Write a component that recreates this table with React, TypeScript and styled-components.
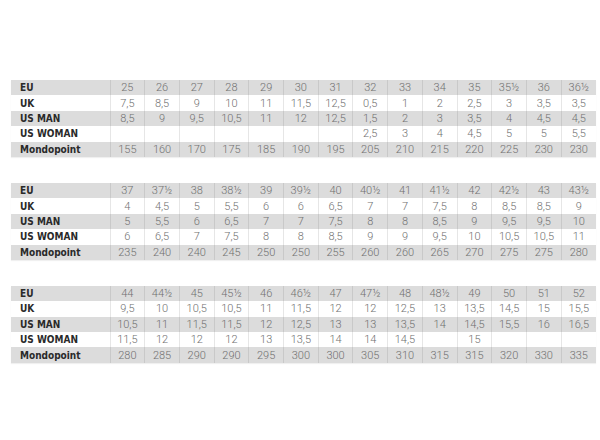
import React from 'react';
import styled, {createGlobalStyle} from 'styled-components';

const GlobalStyle = createGlobalStyle`
    html, body {
        margin: 0;
        padding: 0;
        background: #ffffff;
    }
`;

type Row = {label: string; values: string[]};

const tables: Row[][] = [
    [
        {label: 'EU', values: ['25', '26', '27', '28', '29', '30', '31', '32', '33', '34', '35', '35½', '36', '36½']},
        {label: 'UK', values: ['7,5', '8,5', '9', '10', '11', '11,5', '12,5', '0,5', '1', '2', '2,5', '3', '3,5', '3,5']},
        {label: 'US MAN', values: ['8,5', '9', '9,5', '10,5', '11', '12', '12,5', '1,5', '2', '3', '3,5', '4', '4,5', '4,5']},
        {label: 'US WOMAN', values: ['', '', '', '', '', '', '', '2,5', '3', '4', '4,5', '5', '5', '5,5']},
        {label: 'Mondopoint', values: ['155', '160', '170', '175', '185', '190', '195', '205', '210', '215', '220', '225', '230', '230']},
    ],
    [
        {label: 'EU', values: ['37', '37½', '38', '38½', '39', '39½', '40', '40½', '41', '41½', '42', '42½', '43', '43½']},
        {label: 'UK', values: ['4', '4,5', '5', '5,5', '6', '6', '6,5', '7', '7', '7,5', '8', '8,5', '8,5', '9']},
        {label: 'US MAN', values: ['5', '5,5', '6', '6,5', '7', '7', '7,5', '8', '8', '8,5', '9', '9,5', '9,5', '10']},
        {label: 'US WOMAN', values: ['6', '6,5', '7', '7,5', '8', '8', '8,5', '9', '9', '9,5', '10', '10,5', '10,5', '11']},
        {label: 'Mondopoint', values: ['235', '240', '240', '245', '250', '250', '255', '260', '260', '265', '270', '275', '275', '280']},
    ],
    [
        {label: 'EU', values: ['44', '44½', '45', '45½', '46', '46½', '47', '47½', '48', '48½', '49', '50', '51', '52']},
        {label: 'UK', values: ['9,5', '10', '10,5', '10,5', '11', '11,5', '12', '12', '12,5', '13', '13,5', '14,5', '15', '15,5']},
        {label: 'US MAN', values: ['10,5', '11', '11,5', '11,5', '12', '12,5', '13', '13', '13,5', '14', '14,5', '15,5', '16', '16,5']},
        {label: 'US WOMAN', values: ['11,5', '12', '12', '12', '13', '13,5', '14', '14', '14,5', '', '15', '', '', '']},
        {label: 'Mondopoint', values: ['280', '285', '290', '290', '295', '300', '300', '305', '310', '315', '315', '320', '330', '335']},
    ],
];

class SizeChart extends React.Component {

    public render() {
        return (
            <Page>
                <GlobalStyle />
                {tables.map((rows, t) => (
                    <SizeTable key={t}>
                        <colgroup>
                            <LabelCol />
                            {rows[0].values.map((_, i) => <col key={i} />)}
                        </colgroup>
                        <tbody>
                            {rows.map((row, r) => (
                                <SizeRow key={row.label} shaded={r % 2 === 0}>
                                    <Label>{row.label}</Label>
                                    {row.values.map((v, i) => <Value key={i}>{v}</Value>)}
                                </SizeRow>
                            ))}
                        </tbody>
                    </SizeTable>
                ))}
            </Page>
        );
    }
}

const Page = styled.div`
    width: 600px;
    height: 440px;
    box-sizing: border-box;
    padding: 80px 4px 0 11px;
    display: flex;
    flex-direction: column;
    gap: 26px;
`;

const SizeTable = styled.table`
    width: 585px;
    border-collapse: collapse;
    table-layout: fixed;
    box-shadow: 0 1px 1px rgba(0, 0, 0, 0.06);
`;

const LabelCol = styled.col`
    width: 99px;
`;

const SizeRow = styled.tr<{shaded: boolean}>`
    height: 15.4px;
    background: ${p => p.shaded ? '#dcdcdc' : '#ffffff'};

    td {
        border-left: 1px solid ${p => p.shaded ? '#c9c9c9' : '#e6e6e6'};
    }
`;

const Label = styled.td`
    padding: 0 0 0 9px;
    font-family: "DejaVu Sans Condensed", "DejaVu Sans", sans-serif;
    font-stretch: condensed;
    font-weight: bold;
    font-size: 10px;
    color: #2a2a2a;
    text-align: left;
    white-space: nowrap;
    line-height: 15px;

    && {
        border-left: none;
    }
`;

const Value = styled.td`
    padding: 0;
    font-family: Roboto, "Liberation Sans", sans-serif;
    font-weight: 300;
    font-size: 11px;
    color: #707070;
    text-align: center;
    line-height: 15px;
`;

export default function App() {
    return <SizeChart />;
}
